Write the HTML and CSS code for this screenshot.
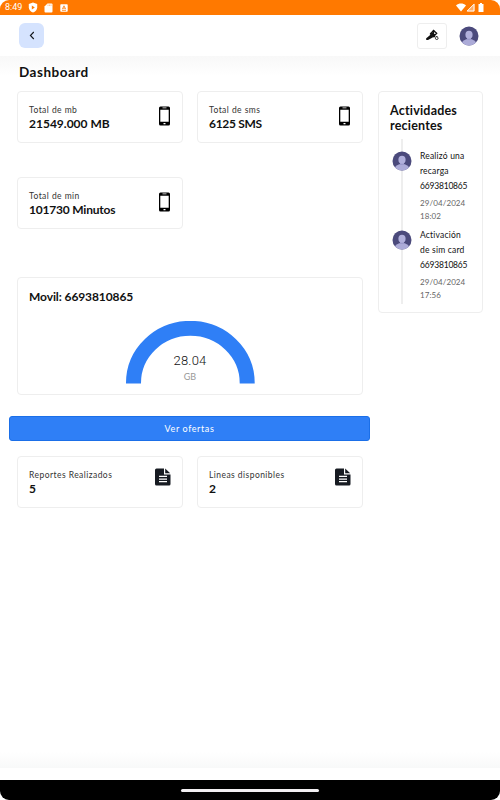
FILE: index.html
```html
<!DOCTYPE html>
<html lang="es">
<head>
	<meta charset="UTF-8">
	<title>Dashboard</title>
	<link rel="stylesheet" href="styles.css">
</head>
<body>
	<svg class="defs">
		<symbol id="phone" viewBox="0 0 12 20">
			<path fill-rule="evenodd" d="M2 .4h8a1.5 1.5 0 0 1 1.5 1.5v16.2a1.5 1.5 0 0 1-1.5 1.5H2a1.5 1.5 0 0 1-1.5-1.5V1.9A1.5 1.5 0 0 1 2 .4zM1.8 3.7v12h8.4v-12zM4 1.5v.7h4v-.7zM5 17v1.2h2V17z"/>
		</symbol>
		<symbol id="file" viewBox="0 0 16 18">
			<path fill-rule="evenodd" d="M1.5.5H9v6h6.5V16a1.5 1.5 0 0 1-1.5 1.5H1.5A1.5 1.5 0 0 1 0 16V2A1.5 1.5 0 0 1 1.5.5zM4 7.8v1.3h8V7.8zm0 2.7v1.2h8v-1.2zm0 2.6v1.2h8v-1.2z"/>
			<path d="M10.2.5l5 4.8h-5z"/>
		</symbol>
		<symbol id="user" viewBox="0 0 20 20">
			<clipPath id="round"><circle cx="10" cy="10" r="9.5"/></clipPath>
			<g clip-path="url(#round)">
				<path fill="#4b4a7c" d="M0 0h20v20H0z"/>
				<ellipse fill="#acabd8" cx="10" cy="18" rx="7.4" ry="5"/>
				<path fill="#9b9acb" d="M8 10h4v4H8z"/>
				<ellipse fill="#b1b0dc" cx="10" cy="8.7" rx="3.6" ry="4"/>
			</g>
		</symbol>
	</svg>
	<div class="screen">
		<div class="status">
			<span class="clock">8:49</span>
			<svg class="st-shield" viewBox="0 0 10 11"><path fill="#fff" d="M5 .4L9.200 2v3.300c0 2.500-1.700 4.400-4.200 5.300C2.500 9.700.8 7.800.8 5.300V2z"/><path fill="#ff7900" d="M3.800 3.400v4l3-2z"/></svg>
			<svg class="st-sd" viewBox="0 0 9 10"><path fill="#fff" d="M3.500.5h4a1 1 0 0 1 1 1v7a1 1 0 0 1-1 1h-6a1 1 0 0 1-1-1v-5z"/><path stroke="#ffae66" stroke-width=".7" d="M4 1.500V3m1.500-1.500V3M7 1.500V3"/></svg>
			<svg class="st-a" viewBox="0 0 8 8"><rect fill="#fff" x=".3" y=".3" width="7.400" height="7.400" rx=".8"/><path fill="none" stroke="#ff7900" stroke-width=".8" d="M2.300 5.200L4 1.800l1.700 3.400M3 4.200h2M2 6.300h4"/></svg>
			<div class="st-right">
				<svg width="10" height="9" viewBox="0 0 10 9"><path fill="#fff" d="M0 2.400C3-.2 7-.2 10 2.400L5 8.600z"/></svg>
				<svg width="9" height="9" viewBox="0 0 9 9"><path fill="#ffad66" d="M8.500.5v8h-8z"/><path fill="none" stroke="#fff" d="M8 1.200v6.800H1.200z"/></svg>
				<svg class="st-bat" width="6" height="9" viewBox="0 0 6 9"><path fill="#fff" d="M2 0h2v1h1.500v8h-5V1H2z"/></svg>
			</div>
		</div>
		<header class="topbar">
			<div class="back"><svg width="6" height="9" viewBox="0 0 6 9"><path fill="none" stroke="#14171c" stroke-width="1.100" d="M4.800 1L1.400 4.500 4.800 8"/></svg></div>
			<div class="theme">
				<svg width="14" height="14" viewBox="0 0 14 14">
					<path fill="#111" d="M1.300 9.300L6 5.200l3 2.500-5.500 3.100C2 11.600.2 10.600 1.300 9.300z"/>
					<path fill="#fff" stroke="#111" stroke-width="1.300" d="M5.500 5l3-3.500 3.200 2.800-3.200 3.400z"/>
					<path stroke="#111" stroke-width="1.400" d="M5.500 4L10 8M9 1.500L8 5M7 4l3 2"/>
					<path fill="#fff" stroke="#111" stroke-width=".9" d="M11.700 7c2.200 2.700 1.200 3.500 0 3.500s-2-.8 0-3.500z"/>
				</svg>
			</div>
			<svg class="avatar"><use href="#user"/></svg>
		</header>
		<main class="content">
			<h1 class="title">Dashboard</h1>
			<div class="columns">
				<div class="left">
					<div class="cards">
						<div class="card stat">
							<div><p class="label">Total de mb</p><p class="value">21549.000 MB</p></div>
							<svg class="phone"><use href="#phone"/></svg>
						</div>
						<div class="card stat">
							<div><p class="label">Total de sms</p><p class="value v-sms">6125 SMS</p></div>
							<svg class="phone"><use href="#phone"/></svg>
						</div>
						<div class="card stat">
							<div><p class="label">Total de min</p><p class="value v-min">101730 Minutos</p></div>
							<svg class="phone"><use href="#phone"/></svg>
						</div>
					</div>
					<div class="card usage">
						<h2 class="movil">Movil: 6693810865</h2>
						<div class="gauge">
							<svg width="130" height="63" viewBox="0 0 130 63"><path fill="none" stroke="#2f7ff6" stroke-width="15" d="M8.500 62.500V62a56.700 54.500 0 0 1 113.700 0v.5"/></svg>
							<div class="reading">
								<span class="amount">28.04</span>
								<span class="unit">GB</span>
							</div>
						</div>
					</div>
					<div class="button">Ver ofertas</div>
					<div class="cards reports">
						<div class="card stat">
							<div><p class="label">Reportes Realizados</p><p class="value">5</p></div>
							<svg class="file"><use href="#file"/></svg>
						</div>
						<div class="card stat">
							<div><p class="label">Lineas disponibles</p><p class="value">2</p></div>
							<svg class="file"><use href="#file"/></svg>
						</div>
					</div>
				</div>
				<div class="card activity">
					<h2 class="act-title">Actividades<br>recientes</h2>
					<div class="timeline">
						<div class="event">
							<svg class="avatar"><use href="#user"/></svg>
							<div><p class="what">Realizó una<br>recarga<br><span class="number">6693810865</span></p><p class="when">29/04/2024<br>18:02</p></div>
						</div>
						<div class="event">
							<svg class="avatar"><use href="#user"/></svg>
							<div><p class="what">Activación<br>de sim card<br><span class="number">6693810865</span></p><p class="when">29/04/2024<br>17:56</p></div>
						</div>
					</div>
				</div>
			</div>
		</main>
		<div class="fade"></div>
		<div class="navbar"><div class="pill"></div></div>
	</div>
</body>
</html>
```
FILE: styles.css
```css
*{margin: 0;padding: 0;box-sizing: border-box;}
body{background: #fff;font-family: Lato, "Liberation Sans", sans-serif;color: #111;}
svg{display: block;flex: none;}
.defs{position: absolute;width: 0;height: 0;}
.screen{width: 500px;height: 800px;display: flex;flex-direction: column;overflow: hidden;border-radius: 9px;}

.status{height: 15px;background: #ff7900;display: flex;align-items: center;padding: 0 16px 0 5px;flex: none;}
.clock{width: 23px;font: 9px/15px Roboto, sans-serif;color: #fff;}
.st-shield{width: 10px;height: 11px;}
.st-sd{width: 9px;height: 10px;margin-left: 6px;}
.st-a{width: 8px;height: 8px;margin-left: 7px;}
.st-right{display: flex;margin-left: auto;}
.st-bat{margin-left: 3px;}

.topbar{height: 41px;display: flex;align-items: center;padding: 0 21px 0 19px;flex: none;}
.back{width: 25px;height: 25px;border-radius: 6px;background: #d5e3fe;display: flex;align-items: center;justify-content: center;}
.theme{width: 30px;height: 26px;margin: 0 12px 0 auto;border: 1px solid #eee;border-radius: 3px;display: flex;align-items: center;justify-content: center;}
.avatar{width: 20px;height: 20px;}

.content{flex: 1;min-height: 0;padding: 8px 17px 0 9px;background: linear-gradient(#f8f8f8, #fff 20px);}
.title{padding-left: 10px;font-size: 13.500px;line-height: 16px;height: 27px;font-weight: 700;letter-spacing: .5px;}
.columns{display: flex;align-items: flex-start;gap: 8px;}
.left{width: 361px;}
.cards{display: grid;grid-template-columns: 166px 166px;column-gap: 14px;row-gap: 34px;padding: 0 8px;}
.card{border: 1px solid #eee;border-radius: 4px;background: #fff;}
.stat{height: 52px;padding: 11px 11px 0;display: flex;justify-content: space-between;}
.label{font-size: 8.500px;line-height: 14px;color: #333;white-space: nowrap;letter-spacing: .45px;}
.value{font-size: 12px;line-height: 14px;font-weight: 700;white-space: nowrap;}
.v-sms{letter-spacing: -.3px;}
.v-min{letter-spacing: -.2px;}
.phone{width: 13px;height: 20px;margin-top: 3px;}
.file{width: 16px;height: 18px;fill: #171b22;}

.usage{height: 118px;margin: 48px 7px 0 8px;padding: 11px 11px 0;}
.movil{font-size: 12px;line-height: 16px;font-weight: 700;letter-spacing: -.1px;}
.gauge{display: grid;justify-content: center;margin-top: 16px;}
.gauge svg, .reading{grid-area: 1 / 1;}
.reading{display: flex;flex-direction: column;align-items: center;padding-top: 31px;}
.amount{font: 300 13px/17px Roboto, sans-serif;letter-spacing: .2px;}
.unit{font-size: 9px;line-height: 16px;color: #999;}
.button{height: 25px;margin: 21px 0 15px;border: 1px solid #1b6fe8;border-radius: 3px;background: #2f7ff6;color: #fff;font-size: 9px;line-height: 23px;text-align: center;letter-spacing: .6px;}

.activity{width: 105px;height: 222px;padding: 12px 0 0 11px;}
.act-title{font-size: 12.500px;line-height: 14.500px;font-weight: 700;letter-spacing: .2px;}
.timeline{height: 165px;margin-top: 6px;padding-top: 10px;background: linear-gradient(#eee, #eee) 11px 0 / 2px 100% no-repeat;}
.event{display: flex;gap: 8px;height: 78.500px;padding-left: 2px;}
.event .avatar{margin-top: 2px;}
.what{font-size: 8.500px;line-height: 15px;white-space: nowrap;letter-spacing: .2px;}
.number{letter-spacing: -.2px;}
.when{font-size: 8px;line-height: 13px;color: #666;margin-top: 3px;letter-spacing: .1px;}

.fade{height: 16px;background: linear-gradient(#fff, #f8f9f9);flex: none;margin-bottom: 12px;}
.navbar{height: 20px;background: #000;display: flex;align-items: center;justify-content: center;flex: none;}
.pill{width: 138px;height: 3px;border-radius: 2px;background: #f2eff2;}
```
